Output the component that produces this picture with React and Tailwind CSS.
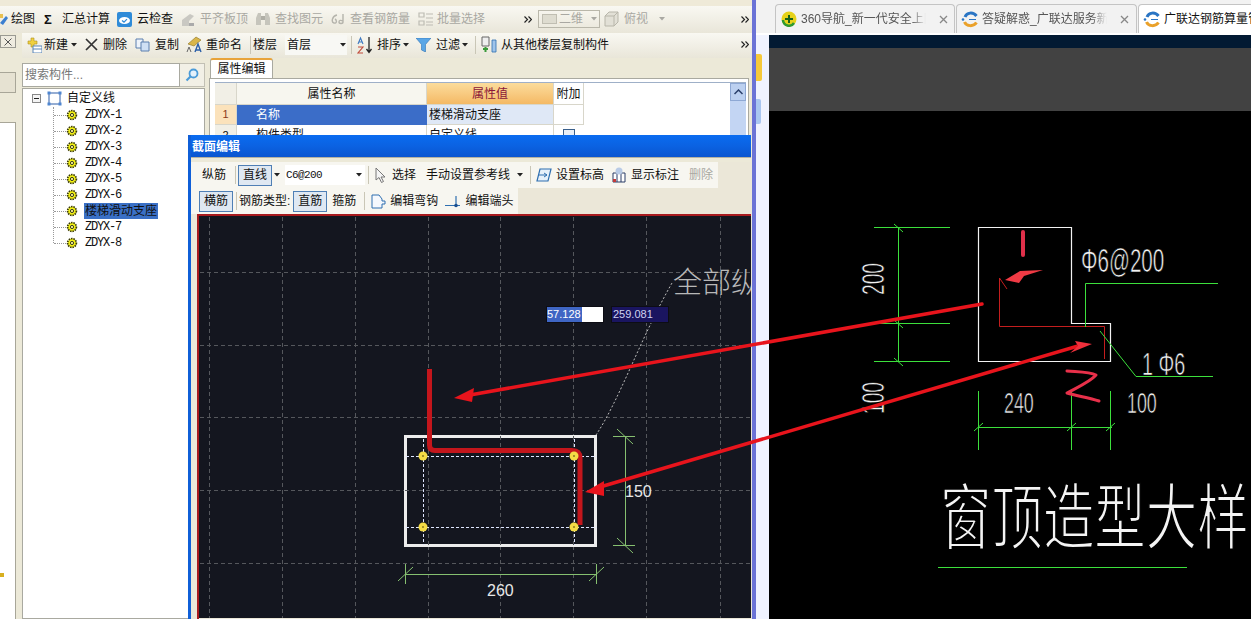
import React from 'react'

const treeItems = ['ZDYX-1', 'ZDYX-2', 'ZDYX-3', 'ZDYX-4', 'ZDYX-5', 'ZDYX-6', '楼梯滑动支座', 'ZDYX-7', 'ZDYX-8']

function Caret({ className = '', color = '#222' }) {
  return (
    <svg width="6" height="4" viewBox="0 0 6 4" className={`shrink-0 ${className}`}>
      <path d="M0 0h6L3 3.5z" fill={color} />
    </svg>
  )
}

function Chevrons({ className = '' }) {
  return (
    <svg width="8" height="7" viewBox="0 0 8 7" className={`shrink-0 ${className}`}>
      <path d="M0.5 0.5l3 3-3 3M4.5 0.5l3 3-3 3" fill="none" stroke="#222" strokeWidth="1.2" />
    </svg>
  )
}

function Sep({ className = '' }) {
  return <div className={`w-px h-[18px] bg-[#c9c6b6] shrink-0 ${className}`} />
}

function Pressed({ children, className = '' }) {
  return (
    <div className={`h-[21px] w-[34px] shrink-0 flex items-center justify-center border border-[#4f7fb5] bg-[#dfe8f2] ${className}`}>
      {children}
    </div>
  )
}

function Gear() {
  return (
    <svg width="12" height="12" viewBox="0 0 12 12" className="shrink-0">
      <circle cx="6" cy="6" r="4.4" fill="#f2f014" stroke="#3a3a08" strokeWidth="1.7" strokeDasharray="1.5 0.9" />
      <circle cx="6" cy="6" r="1.6" fill="#fffb90" stroke="#222" strokeWidth="0.9" />
    </svg>
  )
}

function LogoE({ className = '' }) {
  return (
    <svg width="18" height="18" viewBox="0 0 18 18" className={`shrink-0 ${className}`}>
      <path d="M4 7C5.5 2.5 12 1.5 15.5 6" fill="none" stroke="#2a75c4" strokeWidth="3" />
      <path d="M3.5 12c2 4.5 9 5 12 0.5" fill="none" stroke="#eaa12a" strokeWidth="3" />
      <path d="M8 9.5h7" stroke="#2a75c4" strokeWidth="1.2" />
      <circle cx="2" cy="9.5" r="1.3" fill="#2a75c4" />
    </svg>
  )
}

function Toolbar1() {
  return (
    <div className="h-[27px] flex items-center pb-px bg-linear-to-b from-[#f9f8f2] to-[#e9e6d9] text-[12px] text-[#111] shrink-0">
      <svg width="8" height="16" viewBox="0 0 8 16" className="shrink-0">
        <path d="M0 12L6 5l2 2-5 7z" fill="#3b7fd0" />
        <path d="M0 3h3v4H0z" fill="#e8c050" />
      </svg>
      <span className="ml-[3px]">绘图</span>
      <span className="ml-[9px] w-[10px] font-bold text-[13px] leading-none">Σ</span>
      <span className="ml-[8px]">汇总计算</span>
      <svg width="15" height="15" viewBox="0 0 15 15" className="ml-[7px] shrink-0">
        <rect width="15" height="15" rx="2" fill="#2f8bd8" />
        <ellipse cx="7.5" cy="8.5" rx="5.5" ry="3.6" fill="#fff" />
        <path d="M5 8.5l2 1.6 3-3" fill="none" stroke="#2f8bd8" strokeWidth="1.3" />
      </svg>
      <span className="ml-[5px]">云检查</span>
      <svg width="14" height="15" viewBox="0 0 14 15" className="ml-[8px] shrink-0">
        <path d="M1 14V8l8-6 4 2-5 5v5z" fill="#c9c8c2" />
        <path d="M8 14v-3h5v3z" fill="#aaa" />
      </svg>
      <span className="ml-[5px] text-[#a9a8a2]">平齐板顶</span>
      <svg width="16" height="14" viewBox="0 0 16 14" className="ml-[7px] shrink-0">
        <path d="M1 13V6l2-5h3v12zM10 13V1h3l2 5v7z" fill="#c6c5bc" />
        <path d="M6 4h4v4H6z" fill="#b0afa6" />
      </svg>
      <span className="ml-[4px] text-[#a9a8a2]">查找图元</span>
      <svg width="14" height="12" viewBox="0 0 14 12" className="ml-[8px] shrink-0">
        <path d="M6 2C1 3 0 9 3 10s3-3 1-4M12 1v8c0 2-4 2-4 0s2-2 4-1" fill="none" stroke="#b5b4ac" strokeWidth="1.4" />
      </svg>
      <span className="ml-[5px] text-[#a9a8a2]">查看钢筋量</span>
      <svg width="16" height="16" viewBox="0 0 16 16" className="ml-[8px] shrink-0">
        <path d="M1 2h5v4H1zM1 10h5v4H1zM8 3h7M8 7h7M8 11h7M8 14h7" fill="none" stroke="#bdbcb3" strokeWidth="1.2" />
      </svg>
      <span className="ml-[3px] text-[#a9a8a2]">批量选择</span>
      <Chevrons className="ml-[39px]" />
      <div className="ml-[6px] w-[62px] h-[18px] shrink-0 border border-[#b9b7aa] flex items-center pl-[3px]">
        <div className="w-[15px] h-[10px] bg-[#dedcd0] border border-[#c0beb2]" />
        <span className="ml-[2px] text-[#a9a8a2]">二维</span>
        <Caret className="ml-[8px]" color="#a9a8a2" />
      </div>
      <svg width="15" height="16" viewBox="0 0 15 16" className="ml-[4px] shrink-0">
        <path d="M1 5l4-4h9v10l-4 4H1z" fill="#e2e0d6" stroke="#b8b6aa" />
        <path d="M1 5h9v10M10 5l4-4" fill="none" stroke="#b8b6aa" />
      </svg>
      <span className="ml-[5px] text-[#a9a8a2]">俯视</span>
      <Caret className="ml-[11px]" color="#a9a8a2" />
      <Chevrons className="ml-auto mr-[3px]" />
    </div>
  )
}

function Toolbar2() {
  return (
    <div className="h-[25px] flex items-center pl-[4px] pb-[2px] bg-linear-to-b from-[#f9f8f2] to-[#e9e6d9] text-[12px] text-[#111] shrink-0">
      <svg width="16" height="16" viewBox="0 0 16 16" className="shrink-0">
        <path d="M5 1v3H2v3h3v3h3V7h3V4H8V1z" fill="#f0d040" stroke="#b09020" strokeWidth="0.6" />
        <rect x="7" y="9" width="9" height="7" fill="#fff" stroke="#5a86b8" />
        <path d="M7 12h9" stroke="#5a86b8" />
      </svg>
      <span className="ml-[2px]">新建</span>
      <Caret className="ml-[3px]" />
      <svg width="13" height="13" viewBox="0 0 13 13" className="ml-[8px] shrink-0">
        <path d="M1 1l11 11M12 1L1 12" stroke="#333" strokeWidth="1.7" />
      </svg>
      <span className="ml-[5px]">删除</span>
      <svg width="15" height="14" viewBox="0 0 15 14" className="ml-[8px] shrink-0">
        <path d="M1 1h7v9H1z" fill="#eef3fa" stroke="#5a7fae" />
        <path d="M6 4h8v9H6z" fill="#cfe0f4" stroke="#5a7fae" />
      </svg>
      <span className="ml-[5px]">复制</span>
      <svg width="16" height="17" viewBox="0 0 16 17" className="ml-[7px] shrink-0">
        <path d="M2 8l8-7 5 3-7 6z" fill="#d9b64a" stroke="#8a7020" strokeWidth="0.6" />
        <path d="M9 16l3-8 3 8M10 14h4" fill="none" stroke="#2b5fa8" strokeWidth="1.4" />
        <path d="M1 16l2-5 2 5" fill="none" stroke="#666" />
      </svg>
      <span className="ml-[4px]">重命名</span>
      <Sep className="ml-[8px]" />
      <span className="ml-[2px]">楼层</span>
      <div className="ml-[8px] w-[62px] h-[20px] shrink-0 bg-[#f8f8f4] flex items-center pl-[2px]">
        <span>首层</span>
        <Caret className="ml-[29px]" />
      </div>
      <Sep className="ml-[4px]" />
      <svg width="16" height="18" viewBox="0 0 16 18" className="ml-[5px] shrink-0">
        <path d="M1 8l2.5-6L6 8M2 6h3" fill="none" stroke="#3d78c0" strokeWidth="1.1" />
        <path d="M1 11h5l-5 6h5" fill="none" stroke="#c04a3a" strokeWidth="1.1" />
        <path d="M12 1v15M9.5 13l2.5 3.5 2.5-3.5" fill="none" stroke="#222" strokeWidth="1.3" />
      </svg>
      <span className="ml-[4px]">排序</span>
      <Caret className="ml-[2px]" />
      <svg width="15" height="14" viewBox="0 0 15 14" className="ml-[7px] shrink-0">
        <path d="M0 0h15L9.5 6.5V14l-4-2V6.5z" fill="#5aa6e6" stroke="#2f74b5" strokeWidth="0.6" />
      </svg>
      <span className="ml-[5px]">过滤</span>
      <Caret className="ml-[2px]" />
      <Sep className="ml-[7px]" />
      <svg width="16" height="17" viewBox="0 0 16 17" className="ml-[5px] shrink-0">
        <path d="M1 1h7v9H1z" fill="#eee" stroke="#666" />
        <path d="M2 13h5M4.5 11v5" stroke="#3a9a3a" strokeWidth="2" />
        <path d="M11 4h4v12h-4z" fill="#9fc4ea" stroke="#2f6fb0" strokeWidth="0.8" />
      </svg>
      <span className="ml-[4px]">从其他楼层复制构件</span>
      <Chevrons className="ml-auto mr-[3px]" />
    </div>
  )
}

function SidePanel() {
  return (
    <div className="w-[16px] shrink-0 flex flex-col pt-[2px]">
      <div className="h-[13px] border border-[#9a9a92] flex items-center justify-center bg-[#efece0]">
        <svg width="8" height="8" viewBox="0 0 8 8">
          <path d="M0.5 0.5l7 7M7.5 0.5l-7 7" stroke="#555" />
        </svg>
      </div>
      <div className="h-[24px]" />
      <div className="h-[21px] bg-[#e6e2d2] border-y border-r border-[#a8a698]" />
      <div className="h-[29px]" />
      <div className="flex-1 bg-white border-r border-t border-[#a8a698] relative">
        <div className="absolute left-0 top-[450px] w-[4px] h-[4px] bg-[#d8b020]" />
      </div>
    </div>
  )
}

function TreePanel() {
  return (
    <div className="w-[183px] shrink-0 flex flex-col">
      <div className="h-[30px] flex items-end pb-[1px]">
        <div className="h-[24px] w-[158px] bg-white border border-[#a9a9a0] flex items-center pl-[2px] text-[12px] text-[#777]">
          搜索构件...
        </div>
        <div className="h-[24px] flex-1 bg-[#f2f0e6] border-y border-r border-[#c2c0b4] flex items-center justify-center">
          <svg width="14" height="14" viewBox="0 0 14 14">
            <circle cx="8.5" cy="5.5" r="4" fill="#e4f1fb" stroke="#4b9bd8" strokeWidth="1.8" />
            <path d="M5.5 8.5L1.5 12.5" stroke="#4b9bd8" strokeWidth="2.2" />
          </svg>
        </div>
      </div>
      <div className="flex-1 bg-white border border-[#a9a9a0] text-[12px] text-[#111]">
        <div className="h-4 flex items-center mt-[1px]">
          <div className="ml-[9px] w-[9px] h-[9px] border border-[#888] flex items-center justify-center bg-[#f4f4f4]">
            <div className="w-[5px] h-px bg-[#222]" />
          </div>
          <svg width="15" height="15" viewBox="0 0 15 15" className="ml-[6px] shrink-0">
            <rect x="2" y="2" width="11" height="11" fill="none" stroke="#2d5da8" />
            <path d="M0.5 0.5h3v3h-3zM11.5 0.5h3v3h-3zM0.5 11.5h3v3h-3zM11.5 11.5h3v3h-3z" fill="#4f86d0" />
          </svg>
          <span className="ml-[5px]">自定义线</span>
        </div>
        <div className="ml-[30px] mt-[1px] border-l border-dotted border-[#999] h-[136px]">
          {treeItems.map(name => (
            <div key={name} className="h-4 flex items-center">
              <div className="w-[12px] border-t border-dotted border-[#999] shrink-0" />
              <Gear />
              {name.startsWith('ZDYX') ? (
                <span className="ml-[7px] font-['Liberation_Mono'] text-[12px] tracking-[-1.2px]">{name}</span>
              ) : (
                <span className="ml-[6px] px-px bg-[#3a70c6] leading-4 whitespace-nowrap">{name}</span>
              )}
            </div>
          ))}
        </div>
      </div>
    </div>
  )
}

function PropertyPanel() {
  return (
    <div className="ml-[4px] flex-1 flex flex-col min-w-0 pr-[3px]">
      <div className="h-[20px] flex items-end pl-[1px]">
        <div className="w-[63px] h-[20px] bg-white border border-b-0 border-[#a9a9a0] border-t-2 border-t-[#e8a33a] rounded-t-[3px] flex items-center justify-center text-[12px] text-[#111]">
          属性编辑
        </div>
      </div>
      <div className="flex-1 bg-white border border-[#a9a9a0] pt-[3px] pl-[5px] pr-[2px] text-[12px] text-[#111]">
        <div className="border-t border-[#9fb0c8] flex justify-between">
          <div className="grid grid-cols-[22px_190px_127px_30px] grid-rows-[22px_20px_20px] w-[369px]">
            <div className="bg-[#f1efe6] border-r border-b border-[#d8d6ca]" />
            <div className="bg-[#f7f6ef] border-r border-b border-[#d8d6ca] flex items-center justify-center">属性名称</div>
            <div className="bg-linear-to-b from-[#fbdc9c] to-[#f4b964] border-r border-b border-[#d8d6ca] flex items-center justify-center text-[#8a1538]">属性值</div>
            <div className="border-r border-b border-[#d8d6ca] flex items-center justify-center">附加</div>
            <div className="bg-[#fbe2bb] border-r border-b border-[#d8d6ca] flex items-center justify-center text-[#8a3a1a] text-[11px]">1</div>
            <div className="bg-[#3b6dc8] text-white flex items-center pl-[19px]">名称</div>
            <div className="bg-[#dfe8f6] border-r border-b border-[#d8d6ca] flex items-center pl-[2px]">楼梯滑动支座</div>
            <div className="border-r border-b border-[#d8d6ca]" />
            <div className="bg-[#f1efe6] border-r border-[#d8d6ca] flex items-center justify-center text-[11px]">2</div>
            <div className="border-r border-[#d8d6ca] flex items-center pl-[19px]">构件类型</div>
            <div className="border-r border-[#d8d6ca] flex items-center pl-[2px]">自定义线</div>
            <div className="flex items-center justify-center">
              <div className="w-[12px] h-[12px] border border-[#3a5f8a] bg-[#e8eef6]" />
            </div>
          </div>
          <div className="w-[16px] bg-[#c3d5f3] flex flex-col">
            <div className="h-[18px] bg-[#bcd0f0] border border-[#8ea8d4] flex items-center justify-center">
              <svg width="9" height="6" viewBox="0 0 9 6">
                <path d="M0.5 5l4-4 4 4" fill="none" stroke="#2a3f6a" strokeWidth="1.5" />
              </svg>
            </div>
          </div>
        </div>
      </div>
    </div>
  )
}

function SectionCanvas() {
  const vLines = [209, 282, 355, 428, 500, 573, 646, 720]
  const hLines = [273, 346, 418, 491, 564]
  return (
    <svg width="554" height="404" viewBox="197 215 554 404" className="block">
      <rect x="197" y="215" width="554" height="404" fill="#14161f" />
      {vLines.map(x => (
        <path key={x} d={`M${x + 0.5} 218V619`} stroke="#55575c" strokeWidth="1" strokeDasharray="4 3" />
      ))}
      {hLines.map(y => (
        <path key={y} d={`M200 ${y + 0.5}H751`} stroke="#55575c" strokeWidth="1" strokeDasharray="4 3" />
      ))}
      <path d="M596 436C620 400 640 340 672 284" fill="none" stroke="#bdbdbd" strokeWidth="1" strokeDasharray="2 2" />
      <rect x="405.5" y="437.5" width="190" height="109" fill="#14161f" stroke="#ededed" strokeWidth="3" />
      <path d="M405 491.5H596M428.5 437V547M500.5 437V547M573.5 437V547" stroke="#55575c" strokeWidth="1" strokeDasharray="4 3" />
      <path d="M406 457.5H597M406 528.5H597M423.5 440V546M574.5 440V546" stroke="#dfe6ff" strokeWidth="1" strokeDasharray="3 2" />
      <path d="M429.5 370V446Q429.5 451.5 435 451.5H572Q580 451.5 580 459V526" fill="none" stroke="#c4161c" strokeWidth="5" />
      {[[423, 457], [574, 457], [423, 528], [574, 528]].map(([x, y]) => (
        <g key={x + '-' + y}>
          <circle cx={x} cy={y} r="4.5" fill="#f5dc45" />
          <circle cx={x} cy={y} r="1" fill="#8a7a20" />
        </g>
      ))}
      <path d="M625.5 437V547M613 437.5H635M613 546.5H635M617 430L633 445M617 539L633 554" fill="none" stroke="#86c070" strokeWidth="1" />
      <path d="M405 575.5H596M405.5 565V585M596.5 565V585M398 582L413 568M589 582L604 568" fill="none" stroke="#86c070" strokeWidth="1" />
      <text x="625" y="498" fill="#e8e8e8" fontSize="16" fontFamily="Liberation Sans, sans-serif">150</text>
      <text x="487" y="597" fill="#e8e8e8" fontSize="16" fontFamily="Liberation Sans, sans-serif">260</text>
      <text x="673" y="294" fill="#b8b8b8" fontSize="29" fontWeight="300" fontFamily="Noto Sans CJK SC, sans-serif">全部纵</text>
    </svg>
  )
}

function SectionDialog() {
  return (
    <div className="absolute left-[188px] top-[135px] w-[563px] h-[484px] flex flex-col overflow-hidden bg-[#ebe7d8] border-l-[3px] border-[#0f5fd8] text-[12px] text-[#111]">
      <div className="h-[22px] shrink-0 -ml-[3px] pl-[3px] bg-linear-to-b from-[#0a6cf0] via-[#0b62e2] to-[#0a55d0] flex items-center text-white font-bold pt-px">
        <span className="ml-px">截面编辑</span>
      </div>
      <div className="h-[5px] shrink-0 bg-[#ece9d8] border-t border-[#b5b2a2]" />
      <div className="h-[26px] w-[527px] shrink-0 bg-[#f7f6f0] flex items-center pl-[11px]">
        <span>纵筋</span>
        <Sep className="ml-[9px]" />
        <Pressed className="ml-[2px]">直线</Pressed>
        <Caret className="ml-[2px]" />
        <div className="ml-[5px] w-[80px] h-[20px] shrink-0 bg-white flex items-center pl-px">
          <span className="font-['Liberation_Mono'] text-[11px] tracking-[-0.6px] w-[40px]">C6@200</span>
          <Caret className="ml-[30px]" />
        </div>
        <Sep className="ml-[3px]" />
        <svg width="12" height="17" viewBox="0 0 12 17" className="ml-[6px] shrink-0">
          <path d="M1 1v12l3-2.5 2.5 5 2-1-2.5-4.5h4z" fill="#f4f4f4" stroke="#777" />
        </svg>
        <span className="ml-[5px]">选择</span>
        <span className="ml-[10px]">手动设置参考线</span>
        <Caret className="ml-[7px]" />
        <Sep className="ml-[7px]" />
        <svg width="16" height="14" viewBox="0 0 16 14" className="ml-[5px] shrink-0">
          <path d="M4 1h11l-3 12H1z" fill="#e6f0fa" stroke="#2f6fb0" strokeWidth="1.2" />
          <path d="M3 7h8M8 5l3 2-3 2" fill="none" stroke="#2f6fb0" />
        </svg>
        <span className="ml-[4px]">设置标高</span>
        <svg width="14" height="16" viewBox="0 0 14 16" className="ml-[8px] shrink-0">
          <path d="M1 6h12v9H1zM5 6v9M9 6v9" fill="#fff" stroke="#2a3d66" />
          <circle cx="7" cy="4" r="3.5" fill="#b9cbe6" />
          <path d="M1 12h3v3H1z" fill="#c23a3a" />
        </svg>
        <span className="ml-[5px]">显示标注</span>
        <span className="ml-[10px] text-[#a9a8a2]">删除</span>
      </div>
      <div className="h-[26px] w-[327px] shrink-0 bg-[#f7f6f0] flex items-center pl-[8px]">
        <Pressed>横筋</Pressed>
        <Sep className="ml-[3px]" />
        <span className="ml-[2px]">钢筋类型:</span>
        <Pressed className="ml-[3px]">直筋</Pressed>
        <span className="ml-[5px]">箍筋</span>
        <Sep className="ml-[8px]" />
        <svg width="15" height="15" viewBox="0 0 15 15" className="ml-[6px] shrink-0">
          <path d="M1 14V1h7l3 4v2h3v3h-3v4z" fill="#f5f8fd" stroke="#2f6fb0" />
        </svg>
        <span className="ml-[4px]">编辑弯钩</span>
        <svg width="15" height="13" viewBox="0 0 15 13" className="ml-[7px] shrink-0">
          <path d="M0 10.5h15M11 1v9" stroke="#2f6fb0" strokeWidth="1.2" />
          <circle cx="11" cy="10.5" r="1.8" fill="#1a4f90" />
        </svg>
        <span className="ml-[5px]">编辑端头</span>
      </div>
      <div className="flex-1 ml-[6px] relative border-t-2 border-l-2 border-[#a81a1e] overflow-hidden min-h-0">
        <div className="-ml-[2px] -mt-[2px]">
          <SectionCanvas />
        </div>
        <div className="absolute left-[347px] top-[90px] w-[58px] h-[17px] bg-white border border-[#0d0d14] font-['Liberation_Sans'] text-[11px] leading-[15px] text-white">
          <span className="bg-[#3f66c4] block w-[35px]">57.128</span>
        </div>
        <div className="absolute left-[412px] top-[90px] w-[58px] h-[17px] bg-[#1a1560] border border-[#0d0d14] font-['Liberation_Sans'] text-[11px] leading-[15px] text-[#cfd3f0] pl-px">
          259.081
        </div>
      </div>
    </div>
  )
}

function BrowserTab({ icon, title, active }) {
  return (
    <div className={`h-[29px] rounded-t-[4px] border border-b-0 border-[#c4c4c4] flex items-center shrink-0 overflow-hidden w-full ${active ? 'bg-white text-[#111]' : 'bg-[#f2f2f2] text-[#555]'}`}>
      <div className="ml-[4px] w-[18px] flex justify-center shrink-0">{icon}</div>
      <div className={`ml-[3px] overflow-hidden whitespace-nowrap text-[12px] ${active ? 'w-auto' : 'w-[125px] [mask-image:linear-gradient(to_right,black_88%,transparent)]'}`}>{title}</div>
      {!active && (
        <svg width="9" height="9" viewBox="0 0 9 9" className="ml-[13px] shrink-0">
          <path d="M1 1l7 7M8 1L1 8" stroke="#888" strokeWidth="1.3" />
        </svg>
      )}
    </div>
  )
}

function CadDrawing() {
  return (
    <svg width="482" height="508" viewBox="769 111 482 508" className="block">
      <path d="M978.5 227.5H1071.5V323.5H1110.5V361.5H978.5Z" fill="none" stroke="#f2f2f2" strokeWidth="1.2" />
      <path d="M1007 289L999.5 278V326.5H1104.5V359" fill="none" stroke="#c41e1e" strokeWidth="1" />
      <g stroke="#3ce03c" strokeWidth="1" fill="none">
        <path d="M898.5 227V361M874 227.5H950M874 323.5H950M874 361.5H950" />
        <path d="M894 224L903 232M894 320L903 328M894 358L903 366" />
        <path d="M1085.5 327V283.5H1218" />
        <path d="M1100 331L1136 376.5H1213" />
        <path d="M978.5 391V450M1071.5 391V450M1110.5 391V450M978 427.5H1112" />
        <path d="M974 431L983 423M1067 431L1076 423M1106 431L1115 423" />
      </g>
      <g fill="#f2f2f2" stroke="#000" strokeWidth="0.5" fontFamily="Liberation Sans, sans-serif">
        <text transform="translate(884 295) rotate(-90) scale(0.8 1.3)" fontSize="24">200</text>
        <text transform="translate(884 414) rotate(-90) scale(0.8 1.3)" fontSize="24">100</text>
        <text transform="translate(1081 272) scale(0.86 1.4)" fontSize="24">Φ6@200</text>
        <text transform="translate(1142 375) scale(0.86 1.4)" fontSize="23">1 Φ6</text>
        <text transform="translate(1004 413) scale(0.85 1.4)" fontSize="21">240</text>
        <text transform="translate(1127 413) scale(0.85 1.4)" fontSize="21">100</text>
      </g>
      <text transform="translate(940 543) scale(0.83 1.15)" fill="#f4f4f4" stroke="#000" strokeWidth="1.7" fontSize="62" fontFamily="Noto Sans CJK SC, sans-serif">窗顶造型大样</text>
      <path d="M938 567.5H1187" stroke="#3ce03c" strokeWidth="1" />
    </svg>
  )
}

function RedMarkup() {
  return (
    <svg width="1251" height="619" viewBox="0 0 1251 619" className="absolute left-0 top-0 pointer-events-none">
      <path d="M982 304L470 395" stroke="#e8141c" strokeWidth="3.5" strokeLinecap="round" />
      <path d="M454 398L474 388L472 402Z" fill="#e8141c" />
      <path d="M1078 346L600 487" stroke="#e8141c" strokeWidth="3.5" />
      <path d="M585 492L604 481L604 496Z" fill="#e8141c" />
      <path d="M1092 344L1075 341L1078 346L1070 353Z" fill="#f0303c" />
      <path d="M1023 232V255" stroke="#e0304a" strokeWidth="4" strokeLinecap="round" />
      <path d="M1005 280L1020 271L1043 270L1024 276L1019 283Z" fill="#f03a44" />
      <path d="M1067 371C1078 372 1090 372 1096 375C1090 382 1076 388 1067 393C1078 396 1090 398 1099 401" fill="none" stroke="#e8304a" strokeWidth="3" strokeLinecap="round" strokeLinejoin="round" />
    </svg>
  )
}

export default function App() {
  return (
    <div className="relative w-[1251px] h-[619px] overflow-hidden flex font-['Liberation_Sans','Noto_Sans_CJK_SC',sans-serif] bg-white">
      {/* left: the rebar app */}
      <div className="w-[752px] shrink-0 flex flex-col bg-[#ece9d8]">
        <div className="h-[6px] bg-[#efead8] shrink-0" />
        <Toolbar1 />
        <div className="flex-1 flex min-h-0">
          <SidePanel />
          <div className="ml-[6px] flex-1 min-w-0 flex flex-col">
            <Toolbar2 />
            <div className="flex-1 flex min-h-0">
              <TreePanel />
              <PropertyPanel />
            </div>
          </div>
        </div>
      </div>
      <div className="w-[4px] shrink-0 bg-[#6b73d6]" />

      {/* right: browser with the question page */}
      <div className="flex-1 flex flex-col min-w-0 bg-[#f0f0f0]">
        <div className="h-[35px] shrink-0 pt-[4px] pl-[19px] pb-[2px] flex gap-px overflow-hidden bg-[#f2f2f2] border-b-2 border-white">
          <div className="w-[180px] shrink-0">
            <BrowserTab
              title="360导航_新一代安全上网导航"
              icon={
                <svg width="16" height="16" viewBox="0 0 16 16">
                  <circle cx="8" cy="8" r="7.5" fill="#e6d21a" />
                  <path d="M2 9a6 6 0 0 0 11 3" fill="none" stroke="#2f9a2f" strokeWidth="2.5" />
                  <path d="M8 4v8M4 8h8" stroke="#16601a" strokeWidth="2" />
                </svg>
              }
            />
          </div>
          <div className="w-[181px] shrink-0">
            <BrowserTab title="答疑解惑_广联达服务新干线" icon={<LogoE />} />
          </div>
          <div className="w-[140px] shrink-0">
            <BrowserTab active title="广联达钢筋算量管" icon={<LogoE />} />
          </div>
        </div>
        <div className="flex-1 flex min-h-0">
          <div className="w-[13px] shrink-0 bg-[#f0f3ff] pt-[19px]">
            <div className="w-[6px] h-[27px] bg-[#f6c93a] rounded-r-[2px]" />
            <div className="w-[5px] h-[25px] mt-[18px] bg-[#a9c6f0] rounded-r-[2px]" />
          </div>
          <div className="flex-1 flex flex-col min-w-0">
            <div className="h-[13px] bg-[#021a33] shrink-0" />
            <div className="h-[63px] bg-[#424242] shrink-0" />
            <div className="flex-1 bg-black overflow-hidden">
              <CadDrawing />
            </div>
          </div>
        </div>
      </div>

      <SectionDialog />
      <RedMarkup />
    </div>
  )
}
